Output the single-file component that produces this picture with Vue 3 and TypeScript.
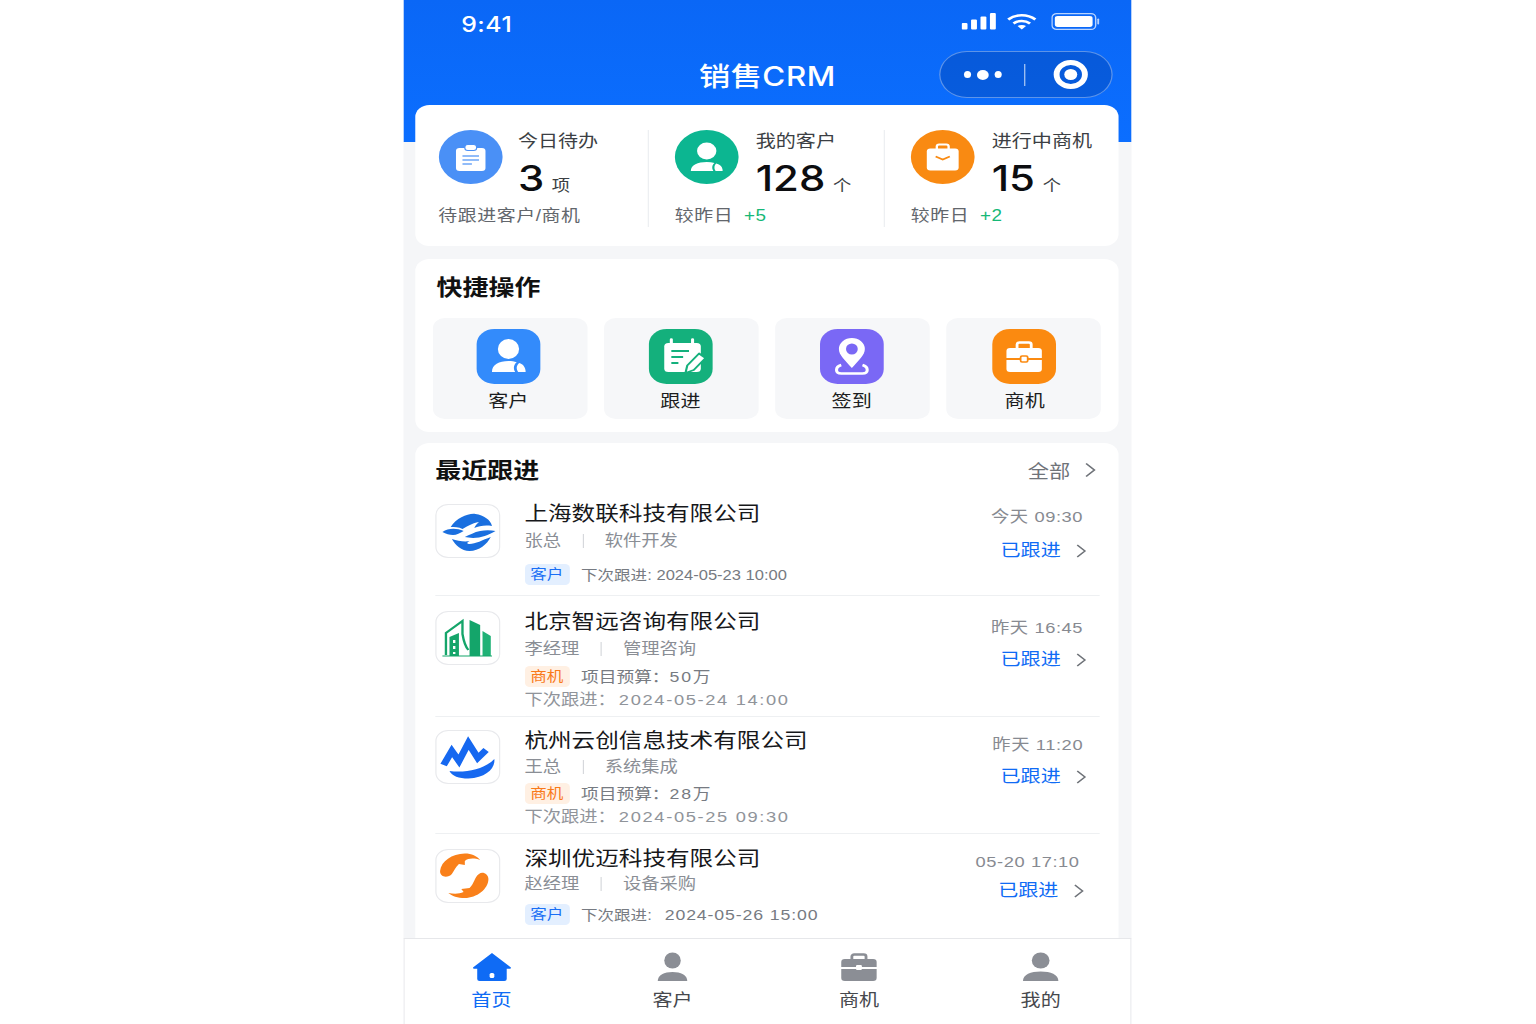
<script setup lang="ts">
type Stat = { key: string; label: string; value: string; unit: string; note: string; delta?: string };
type Quick = { key: string; label: string };
type Tab = { key: string; label: string; active?: boolean };
type Follow = {
  logo: string;
  name: string;
  contact: string;
  trade: string;
  tag: "客户" | "商机";
  budget?: string;
  next: string;
  time: string;
};

const stats: Stat[] = [
  { key: "todo", label: "今日待办", value: "3", unit: "项", note: "待跟进客户/商机" },
  { key: "customer", label: "我的客户", value: "128", unit: "个", note: "较昨日", delta: "+5" },
  { key: "deal", label: "进行中商机", value: "15", unit: "个", note: "较昨日", delta: "+2" },
];

const quicks: Quick[] = [
  { key: "customer", label: "客户" },
  { key: "follow", label: "跟进" },
  { key: "sign", label: "签到" },
  { key: "deal", label: "商机" },
];

const follows: Follow[] = [
  { logo: "wave", name: "上海数联科技有限公司", contact: "张总", trade: "软件开发", tag: "客户", next: "2024-05-23 10:00", time: "今天 09:30" },
  { logo: "city", name: "北京智远咨询有限公司", contact: "李经理", trade: "管理咨询", tag: "商机", budget: "50万", next: "2024-05-24 14:00", time: "昨天 16:45" },
  { logo: "peak", name: "杭州云创信息技术有限公司", contact: "王总", trade: "系统集成", tag: "商机", budget: "28万", next: "2024-05-25 09:30", time: "昨天 11:20" },
  { logo: "swirl", name: "深圳优迈科技有限公司", contact: "赵经理", trade: "设备采购", tag: "客户", next: "2024-05-26 15:00", time: "05-20 17:10" },
];

const tabs: Tab[] = [
  { key: "home", label: "首页", active: true },
  { key: "customer", label: "客户" },
  { key: "deal", label: "商机" },
  { key: "me", label: "我的" },
];
</script>

<template>
  <div class="phone">
    <header class="header">
      <div class="status">
        <span class="clock">9:41</span>
        <div class="status-icons">
          <svg class="signal" width="30" height="17" viewBox="0 0 30 17" fill="#fff">
            <rect x="0" y="10" width="5" height="6.500" rx="1" />
            <rect x="8" y="6.500" width="5" height="10" rx="1" />
            <rect x="16" y="3.500" width="5" height="13" rx="1" />
            <rect x="24" y="0" width="5" height="16.500" rx="1" />
          </svg>
          <svg class="wifi" width="26" height="17" viewBox="0 0 26 17" fill="none" stroke="#fff" stroke-width="2.600">
            <path d="M1.500 6.500C8 0.800 18 0.800 24.500 6.500" />
            <path d="M6 10.500C10 7.200 16 7.200 20 10.500" />
            <path d="M13 16.500l-3.600-3.400c2-1.400 5.200-1.400 7.200 0z" fill="#fff" stroke="none" />
          </svg>
          <svg width="41" height="17" viewBox="0 0 41 17">
            <rect x="0.600" y="0.600" width="37" height="15.800" rx="4" fill="none" stroke="#b9d4ff" stroke-width="1.200" />
            <rect x="3" y="3" width="32" height="11" rx="2.400" fill="#fff" />
            <rect x="39" y="5.500" width="1.600" height="6" rx="0.800" fill="#b9d4ff" />
          </svg>
        </div>
      </div>
      <div class="titlebar">
        <span></span>
        <h1 class="title">销售<span class="title-latin">CRM</span></h1>
        <div class="capsule">
          <div class="dots"><i></i><i class="big"></i><i></i></div>
          <span class="capsule-line"></span>
          <span class="target"><i></i></span>
        </div>
      </div>
    </header>

    <main class="content">
      <section class="card stats">
        <div v-for="s in stats" :key="s.key" class="stat">
          <div class="stat-top">
            <span class="stat-icon" :class="s.key">
              <svg width="54" height="54" viewBox="0 0 54 54">
                <template v-if="s.key === 'todo'">
                  <rect x="14.500" y="18" width="25" height="23" rx="3" fill="#fff" />
                  <rect x="22" y="14.500" width="10" height="6" rx="2.500" fill="#fff" stroke="#4a90f6" stroke-width="1" />
                  <path d="M20 26h14M20 30h14M20 34h8" stroke="#6ea6f7" stroke-width="1.600" />
                </template>
                <template v-else-if="s.key === 'customer'">
                  <ellipse cx="27" cy="21" rx="8.200" ry="8.500" fill="#fff" />
                  <path d="M13.500 41c0-6 6-9 13.500-9 2.400 0 4.600.3 6.600 1-2 1.700-2.600 5-1 8z" fill="#fff" />
                  <path d="M35 33.500c3.400.8 5.500 3.500 5.500 7.500h-6c-1.600-2.700-1.200-5.700.5-7.500z" fill="#fff" />
                </template>
                <template v-else>
                  <path d="M22 19v-2.500a2 2 0 0 1 2-2h6a2 2 0 0 1 2 2V19" fill="none" stroke="#fff" stroke-width="2" />
                  <rect x="13.500" y="18.500" width="27" height="22" rx="3" fill="#fff" />
                  <path d="M21 26.500l6 3 6-3" fill="none" stroke="#f98a12" stroke-width="1.600" />
                </template>
              </svg>
            </span>
            <div class="stat-text">
              <div class="stat-label">{{ s.label }}</div>
              <div class="stat-value">{{ s.value }}<span class="stat-unit">{{ s.unit }}</span></div>
            </div>
          </div>
          <div class="stat-note">{{ s.note }}<span v-if="s.delta" class="stat-delta">{{ s.delta }}</span></div>
        </div>
      </section>

      <section class="card quick">
        <h2 class="section-title">快捷操作</h2>
        <div class="quick-grid">
          <div v-for="q in quicks" :key="q.key" class="quick-item">
            <span class="quick-icon" :class="q.key">
              <svg width="54" height="55" viewBox="0 0 54 55">
                <template v-if="q.key === 'customer'">
                  <ellipse cx="27" cy="20" rx="9" ry="10" fill="#fff" />
                  <path d="M13 43c0-7.500 6-11 14-11 2.500 0 5 .4 7 1.200-2.500 2-3.300 6.500-1.300 9.800z" fill="#fff" />
                  <path d="M36 34c3.500 1 5.500 4.500 5.500 9h-6.300c-2-3.200-1.400-6.800.8-9z" fill="#fff" />
                </template>
                <template v-else-if="q.key === 'follow'">
                  <rect x="13" y="14" width="31" height="29" rx="3.500" fill="#fff" />
                  <path d="M19 10.500v6M37 10.500v6" stroke="#fff" stroke-width="2.600" stroke-linecap="round" />
                  <path d="M19 22h15M19 28h10M19 34h6" stroke="#14b07c" stroke-width="2" />
                  <path d="M31 44l1.500-7.500 10-12 5.500 4.500-10 12z" fill="#fff" stroke="#14b07c" stroke-width="1.800" stroke-linejoin="round" />
                </template>
                <template v-else-if="q.key === 'sign'">
                  <path d="M27 39C21 31 16 26 16 20a11 11 0 0 1 22 0c0 6-5 11-11 19z" fill="#fff" />
                  <ellipse cx="27" cy="20" rx="5" ry="5.500" fill="#7a68f5" />
                  <path d="M18 36c-3 1-4 3-4 5 0 2.500 2 3.500 4 3.500h18c2 0 4-1 4-3.500 0-2-1-4-4-5" fill="none" stroke="#fff" stroke-width="2.600" />
                </template>
                <template v-else>
                  <path d="M21 19v-3.500a2 2 0 0 1 2-2h8a2 2 0 0 1 2 2V19" fill="none" stroke="#fff" stroke-width="2.400" />
                  <path d="M12 22a3 3 0 0 1 3-3h24a3 3 0 0 1 3 3v7H12z" fill="#fff" />
                  <path d="M12 31h30v9a3 3 0 0 1-3 3H15a3 3 0 0 1-3-3z" fill="#fff" />
                  <rect x="24" y="27" width="6" height="6" rx="1.200" fill="#fff" stroke="#fb8a10" stroke-width="1.500" />
                </template>
              </svg>
            </span>
            <span class="quick-label">{{ q.label }}</span>
          </div>
        </div>
      </section>

      <section class="card recent">
        <div class="recent-head">
          <h2 class="section-title">最近跟进</h2>
          <div class="more">
            全部
            <svg width="10" height="16" viewBox="0 0 10 16" fill="none" stroke="#6f7379" stroke-width="1.500"><path d="M1.500 1.500L8.500 8l-7 6.500" /></svg>
          </div>
        </div>

        <div v-for="f in follows" :key="f.name" class="row">
          <span class="logo">
            <svg width="54" height="54" viewBox="0 0 54 54">
              <template v-if="f.logo === 'wave'">
                <g fill="#1a6fdf">
                  <path d="M12 23C17 14 27 9 33 10 40 11 46 16 47 22 41 21 36 22 32 24 33 21 35 19 36 18 30 19 25 23 22 25 19 23 15 23 12 23z" />
                  <path d="M5 28C10 24 17 24 23 27 20 29 17 31 14 31 11 31 8 30 5 28z" />
                  <path d="M50 27C44 31 38 34 31 34 28 34 26 33 24 33 28 31 32 28 37 27 41 26 46 26 50 27z" />
                  <path d="M13 35C18 37 24 38 28 37 25 39 26 40 28 40 33 40 39 36 46 33 43 40 36 47 28 47 21 47 16 41 13 35z" />
                </g>
              </template>
              <template v-else-if="f.logo === 'city'">
                <path d="M28 9l9 5v31h-9z" fill="#14a56a" />
                <path d="M39 20l7 5v20h-7z" fill="#1fb276" />
                <path d="M8 44V22L22 10V23C23 30 24 35 27 39" fill="none" stroke="#15a56a" stroke-width="2" />
                <path d="M11 45V26l8-4v23z" fill="#15a56a" />
                <path d="M15 29v3M15 35v3M15 41v2" stroke="#fff" stroke-width="2" />
                <path d="M5 45h42" stroke="#15a56a" stroke-width="1.200" />
              </template>
              <template v-else-if="f.logo === 'peak'">
                <path d="M6 35L13 21 19 31 27 13 35 28 42 20" fill="none" stroke="#1668f0" stroke-width="6" />
                <path d="M11 41C24 43 40 40 49 29 50 38 42 48 27 48.500 19 48.500 13 46 11 41z" fill="#1668f0" />
              </template>
              <template v-else>
                <path d="M3 22C4 12 13 5 24 4.500 30 4.500 34 7 37 11 32 9 27 9 24 12L24 16 19 15C16 18 15 22 13 25 10 29 3 29 3 22z" fill="#f9801a" />
                <path d="M44 30C44 40 34 49 24 49 18 49 13 47 10 44 15 45 19 45 23 43L21 40 28 39C32 35 32 28 36 25 39 22 44 25 44 30z" fill="#f9801a" />
              </template>
            </svg>
          </span>
          <div class="row-main">
            <div class="row-name">{{ f.name }}</div>
            <div class="row-sub">
              <span>{{ f.contact }}</span><i class="sub-line"></i><span>{{ f.trade }}</span>
            </div>
            <div class="row-meta">
              <span class="tag" :class="f.tag === '客户' ? 'tag-blue' : 'tag-orange'">{{ f.tag }}</span>
              <span v-if="f.budget" class="meta-text">项目预算：<b>{{ f.budget }}</b></span>
              <span v-else class="meta-text meta-next">下次跟进:<b class="date">{{ f.next }}</b></span>
            </div>
            <div v-if="f.budget" class="row-next">下次跟进：<b>{{ f.next }}</b></div>
          </div>
          <div class="row-side">
            <div class="row-time">{{ f.time }}</div>
            <div class="row-link">
              已跟进
              <svg width="9" height="14" viewBox="0 0 9 14" fill="none" stroke="#6f7379" stroke-width="1.400"><path d="M1 1l6.500 6L1 13" /></svg>
            </div>
          </div>
        </div>
      </section>
    </main>

    <nav class="tabbar">
      <div v-for="t in tabs" :key="t.key" class="tab" :class="{ active: t.active }">
        <svg width="34" height="30" viewBox="0 0 34 30">
          <template v-if="t.key === 'home'">
            <path d="M17 1L32.800 15.300a.8.800 0 0 1-.6 1.400H29.500V27a2 2 0 0 1-2 2h-21a2 2 0 0 1-2-2V16.700H1.800A.8.800 0 0 1 1.200 15.300z" fill="#0f6bf5" />
            <rect x="15" y="21" width="4" height="5" rx="1.500" fill="#fff" />
          </template>
          <template v-else-if="t.key === 'deal'">
            <path d="M11 8V4.500a2 2 0 0 1 2-2h8a2 2 0 0 1 2 2V8" fill="none" stroke="#8b8e95" stroke-width="2.400" />
            <path d="M2 10a3 3 0 0 1 3-3h24a3 3 0 0 1 3 3v5H2z" fill="#8b8e95" />
            <path d="M2 17h30v9a3 3 0 0 1-3 3H5a3 3 0 0 1-3-3z" fill="#8b8e95" />
            <rect x="14.500" y="13" width="5" height="5" rx="1" fill="#fff" />
          </template>
          <template v-else-if="t.key === 'customer'">
            <ellipse cx="17" cy="8.500" rx="7" ry="8" fill="#8b8e95" />
            <path d="M4.500 29c0-6 5.500-9 12.500-9s12.500 3 12.500 9z" fill="#8b8e95" />
          </template>
          <template v-else>
            <ellipse cx="17" cy="8.500" rx="7.500" ry="8" fill="#8b8e95" />
            <path d="M2 29c0-6.500 6.500-9.500 15-9.500S32 22.500 32 29z" fill="#8b8e95" />
          </template>
        </svg>
        <span class="tab-label">{{ t.label }}</span>
      </div>
    </nav>
  </div>
</template>

<style>
html,
body {
  margin: 0;
  background: #fff;
}
</style>

<style scoped>
/* the shot is 1.18x wider than tall, so the phone is laid out at 617px and stretched once */
.phone {
  width: 617px;
  height: 1024px;
  margin: 0 auto;
  display: flex;
  flex-direction: column;
  overflow: hidden;
  background: #f5f6f8;
  transform: translateX(-1px) scaleX(1.18);
  font-family: "Liberation Sans", "Noto Sans CJK SC", sans-serif;
  color: #111;
}

.header {
  height: 142px;
  flex: none;
  background: linear-gradient(180deg, #0a67f6, #0b6eff);
  color: #fff;
}
.status {
  height: 48px;
  display: flex;
  align-items: center;
  justify-content: space-between;
  padding: 0 27px 0 49px;
  box-sizing: border-box;
}
.clock {
  font: 500 21px Inter, sans-serif;
  letter-spacing: 0.4px;
}
.status-icons {
  display: flex;
  align-items: center;
  margin-top: -6px;
}
.wifi {
  margin: 0 12px 0 8px;
}
.titlebar {
  display: grid;
  grid-template-columns: 1fr auto 1fr;
  align-items: center;
  padding: 0 16px;
  height: 47px;
}
.title {
  margin: 6px 0 0;
  font-size: 26.500px;
  font-weight: 500;
  line-height: 47px;
  letter-spacing: 0.3px;
}
.title-latin {
  font: 500 26.500px Inter, sans-serif;
  letter-spacing: 0.500px;
}
.capsule {
  justify-self: end;
  width: 147px;
  height: 47px;
  box-sizing: border-box;
  display: flex;
  align-items: center;
  border: 1px solid rgba(255, 255, 255, 0.35);
  border-radius: 24px;
  background: rgba(0, 50, 140, 0.28);
  padding-left: 20px;
}
.dots {
  display: flex;
  align-items: center;
  gap: 5px;
}
.dots i {
  width: 6px;
  height: 7px;
  border-radius: 50%;
  background: #fff;
}
.dots i.big {
  width: 10px;
  height: 10px;
}
.capsule-line {
  width: 1px;
  height: 22px;
  margin-left: 19px;
  background: rgba(255, 255, 255, 0.7);
}
.target {
  width: 29px;
  height: 29px;
  margin-left: 24px;
  box-sizing: border-box;
  border: 5px solid #fff;
  border-radius: 50%;
  display: flex;
  align-items: center;
  justify-content: center;
}
.target i {
  width: 11px;
  height: 11px;
  border-radius: 50%;
  background: #fff;
}

.content {
  flex: 1;
  min-height: 0;
  margin-top: -37px;
  padding: 0 11px 0 10px;
  display: flex;
  flex-direction: column;
  position: relative;
}
.card {
  background: #fff;
  border-radius: 12px;
}

.stats {
  display: grid;
  grid-template-columns: 197px 200px 1fr;
  height: 141px;
  box-sizing: border-box;
  padding: 25px 0 20px;
}
.stat {
  padding-left: 19.500px;
}
.stat + .stat {
  border-left: 1px solid #eceef1;
  padding-left: 22px;
}
.stat-top {
  display: flex;
  gap: 13.500px;
  height: 54px;
}
.stat + .stat .stat-top {
  gap: 14.500px;
}
.stat-icon {
  width: 54px;
  height: 54px;
  border-radius: 50%;
  flex: none;
}
.stat-icon.todo {
  background: #4a90f6;
}
.stat-icon.customer {
  background: #0cb691;
}
.stat-icon.deal {
  background: #f98a12;
}
.stat-label {
  margin-top: 1px;
  font-size: 17px;
  line-height: 22px;
  color: #3c3f44;
}
.stat-value {
  margin-top: 6px;
  font: 500 35.500px/40px Inter, sans-serif;
  color: #0c0d10;
}
.stat-unit {
  margin-left: 6.500px;
  font: 15.500px "Liberation Sans", "Noto Sans CJK SC", sans-serif;
  color: #3c3f44;
}
.stat-note {
  margin-top: 21px;
  font-size: 16px;
  line-height: 22px;
  letter-spacing: 0.500px;
  color: #62666c;
}
.stat-delta {
  margin-left: 9px;
  color: #16b877;
}

.section-title {
  margin: 0;
  font-size: 22px;
  font-weight: 600;
  line-height: 30px;
  color: #111;
}

.quick {
  margin-top: 13px;
  height: 173px;
  box-sizing: border-box;
  padding: 14px 15px 0;
}
.quick .section-title {
  padding-left: 3px;
}
.quick-grid {
  margin-top: 15px;
  display: grid;
  grid-template-columns: repeat(4, minmax(0, 1fr));
  gap: 14.500px;
}
.quick-item {
  height: 101px;
  box-sizing: border-box;
  padding: 11px 1.500px 0 0;
  border-radius: 10px;
  background: #f6f7f9;
  display: flex;
  flex-direction: column;
  align-items: center;
}
.quick-item:first-child {
  padding-right: 3px;
}
.quick-item:last-child {
  padding: 11px 0 0 1.500px;
}
.quick-icon {
  width: 54px;
  height: 55px;
  border-radius: 15px;
}
.quick-icon.customer {
  background: #338bfb;
}
.quick-icon.follow {
  background: #14b07c;
}
.quick-icon.sign {
  background: #7a68f5;
}
.quick-icon.deal {
  background: #fb8a10;
}
.quick-label {
  margin-top: 7px;
  font-size: 17px;
  line-height: 22px;
  color: #1c1d20;
}

.recent {
  margin-top: 11px;
  flex: 1;
  min-height: 0;
  padding: 13px 16px 0 17px;
  border-radius: 12px 12px 0 0;
}
.recent-head {
  display: flex;
  align-items: center;
  justify-content: space-between;
  padding-right: 3px;
}
.more {
  display: flex;
  align-items: center;
  gap: 12px;
  margin-top: -2px;
  font-size: 18px;
  color: #6f7379;
}

.row {
  display: flex;
  border-bottom: 1px solid #eef0f2;
}
.row:last-child {
  border-bottom: 0;
}
.logo {
  width: 55px;
  height: 54px;
  flex: none;
  box-sizing: border-box;
  border: 1px solid #e8e9ec;
  border-radius: 11px;
  background: #fff;
  display: flex;
  align-items: center;
  justify-content: center;
}
.logo svg {
  flex: none;
}
.row-main {
  flex: 1;
  margin-left: 20.500px;
  min-width: 0;
}
.row-name {
  font-size: 20px;
  line-height: 20px;
  color: #17181b;
}
.row-sub {
  display: flex;
  align-items: center;
  font-size: 15.500px;
  line-height: 20px;
  color: #8a8e95;
}
.sub-line {
  width: 1px;
  height: 14px;
  margin: 0 18px;
  background: #d6d8dc;
}
.row-meta {
  display: flex;
  align-items: center;
  height: 21px;
}
.tag {
  width: 38px;
  height: 21px;
  border-radius: 4px;
  text-align: center;
  font-size: 14px;
  line-height: 21px;
}
.tag-blue {
  background: #e3efff;
  color: #1a6ff5;
}
.tag-orange {
  background: #fff0e3;
  color: #f97a1a;
}
.meta-text {
  margin-left: 10px;
  font-size: 15px;
  line-height: 20px;
  color: #777b82;
}
.meta-text b,
.row-next b {
  font-weight: 400;
  letter-spacing: 1.500px;
}
.meta-next {
  font-size: 14px;
}
.meta-text .date {
  margin-left: 4px;
  letter-spacing: 0;
  font-size: 14px;
}
.row-next {
  margin-top: 3px;
  font-size: 15.500px;
  line-height: 20px;
  color: #90949a;
}
.row-next b {
  margin-left: 2.500px;
  letter-spacing: 1.400px;
}
.row-side {
  flex: none;
  display: flex;
  flex-direction: column;
  align-items: flex-end;
  padding-right: 11px;
}
.row-time {
  margin-right: 3px;
  font-size: 15.500px;
  line-height: 20px;
  letter-spacing: 0.500px;
  color: #878a91;
}
.row-link {
  display: flex;
  align-items: center;
  gap: 13px;
  font-size: 17px;
  line-height: 20px;
  color: #0f6bf5;
}

.row:nth-of-type(2) { padding: 18px 0 10px; }
.row:nth-of-type(2) .row-sub { margin-top: 7px; }
.row:nth-of-type(2) .row-meta { margin-top: 13px; }
.row:nth-of-type(2) .row-side { padding-top: 3px; }
.row:nth-of-type(2) .row-link { margin-top: 14px; }

.row:nth-of-type(3) { padding: 15px 0 6px; }
.row:nth-of-type(3) .row-name { margin-top: 1px; }
.row:nth-of-type(3) .row-sub { margin-top: 7px; }
.row:nth-of-type(3) .row-meta { margin-top: 7px; }
.row:nth-of-type(3) .row-side { padding-top: 7px; }
.row:nth-of-type(3) .row-link { margin-top: 12px; }

.row:nth-of-type(4) { padding: 13px 0 6px; }
.row:nth-of-type(4) .row-name { margin-top: 1px; }
.row:nth-of-type(4) .row-sub { margin-top: 6px; }
.row:nth-of-type(4) .row-meta { margin-top: 6px; }
.row:nth-of-type(4) .row-side { padding-top: 5px; }
.row:nth-of-type(4) .row-link { margin-top: 12px; }

.row:nth-of-type(5) { padding: 15px 0 14px; }
.row:nth-of-type(5) .row-sub { margin-top: 5px; }
.row:nth-of-type(5) .row-meta { margin-top: 10px; }
.row:nth-of-type(5) .row-side { padding: 3px 13px 0 0; }
.row:nth-of-type(5) .row-time { margin-right: 4px; }
.row:nth-of-type(5) .row-link { margin-top: 9px; }
.row:nth-of-type(5) .date { margin-left: 11px; letter-spacing: 0.740px; font-size: 15px; }

.tabbar {
  height: 86px;
  flex: none;
  box-sizing: border-box;
  display: grid;
  grid-template-columns: 147px 160px 156px 1fr;
  padding-top: 13px;
  background: #fff;
  border-top: 1px solid #e6e7ea;
  border-left: 1px solid #e9eaed;
  border-right: 1px solid #e9eaed;
}
.tab {
  display: flex;
  flex-direction: column;
  align-items: center;
}
.tab-label {
  margin-top: 7px;
  font-size: 17px;
  line-height: 24px;
  color: #46484d;
}
.tab.active .tab-label {
  color: #0f6bf5;
}
</style>
